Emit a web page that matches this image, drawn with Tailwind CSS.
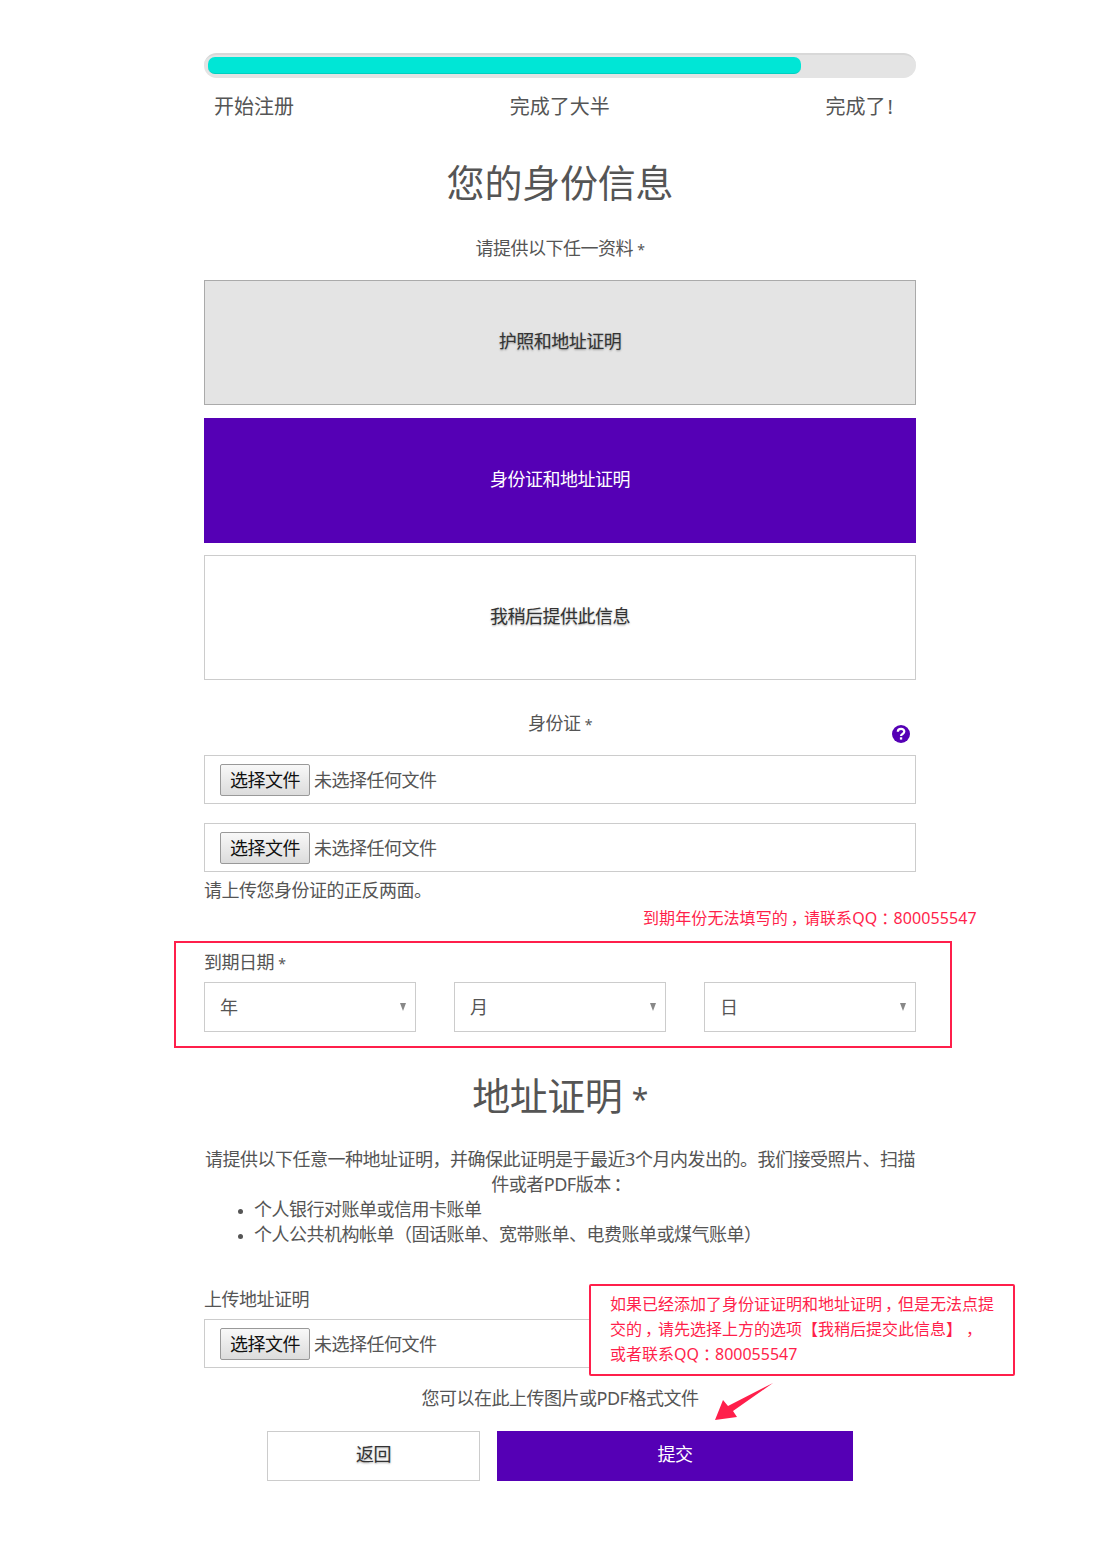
<!DOCTYPE html>
<html lang="zh-CN">
<head>
    <meta charset="UTF-8">
    <meta name="viewport" content="width=device-width, initial-scale=1.0">
    <title>您的身份信息</title>
    <script src="https://cdn.jsdelivr.net/npm/@tailwindcss/browser@4"></script>
</head>
<body class="bg-white text-[#555] font-[Noto_Sans,Noto_Sans_CJK_SC,sans-serif]">
    <div class="relative w-[1100px] h-[1543px] overflow-hidden">
        <main class="w-[712px] ml-[204px] pt-[53px] text-[18px] tracking-[-0.5px] leading-[24px]">
            <!-- progress -->
            <div class="h-[25px] rounded-full bg-[#e4e4e4] border-t-[2px] border-[#d8d8d8] pt-[2px] pl-[4px]">
                <div class="h-[17px] w-[593px] rounded-[7px] bg-[#00e6d6] border-b border-[#00cfc0]"></div>
            </div>
            <div class="mt-[17px] flex justify-between pl-[10px] pr-[21px] text-[20px] tracking-normal h-[24px]">
                <span>开始注册</span>
                <span>完成了大半</span>
                <span>完成了<span class="pl-[2px] pr-[2px]">!</span></span>
            </div>

            <h1 class="mt-[40px] h-[46px] text-center text-[38px] leading-[46px] tracking-[-0.2px]">您的身份信息</h1>
            <p class="mt-[31px] h-[24px] text-center">请提供以下任一资料 <span class="text-[14px] leading-[14px]">*</span></p>

            <div class="mt-[20px] h-[125px] flex items-center justify-center pb-[4px] bg-[#e4e4e4] border border-[#aaa] text-[#333] [text-shadow:0_1px_2px_rgba(0,0,0,0.35)]">护照和地址证明</div>
            <div class="mt-[13px] h-[125px] flex items-center justify-center pb-[4px] bg-[#5500b5] text-white">身份证和地址证明</div>
            <div class="mt-[12px] h-[125px] flex items-center justify-center pb-[4px] bg-white border border-[#ccc] text-[#333] [text-shadow:0_1px_2px_rgba(0,0,0,0.35)]">我稍后提供此信息</div>

            <div class="relative mt-[31px] h-[24px] text-center">
                身份证 <span class="text-[14px] leading-[14px]">*</span>
                <svg class="absolute right-[5px] top-[13px] w-[20px] h-[20px]" viewBox="0 0 20 20">
                    <circle cx="10" cy="10" r="9" fill="#5500b5"/>
                    <path d="M6.8 7.8c0-2 1.500-3 3.300-3s3.200 1 3.200 2.800c0 2.400-3.300 2.300-3.300 4.400" fill="none" stroke="#fff" stroke-width="2.200"/>
                    <rect x="8.900" y="13.300" width="2.300" height="2.300" fill="#fff"/>
                </svg>
            </div>

            <div class="mt-[20px] h-[49px] flex items-center border border-[#ccc] pl-[15px]">
                <button class="h-[32px] w-[90px] border border-[#999] rounded-[2px] bg-gradient-to-b from-[#f8f8f8] to-[#dcdcdc] text-[#111] text-[18px]">选择文件</button>
                <span class="ml-[4px]">未选择任何文件</span>
            </div>
            <div class="mt-[19px] h-[49px] flex items-center border border-[#ccc] pl-[15px]">
                <button class="h-[32px] w-[90px] border border-[#999] rounded-[2px] bg-gradient-to-b from-[#f8f8f8] to-[#dcdcdc] text-[#111] text-[18px]">选择文件</button>
                <span class="ml-[4px]">未选择任何文件</span>
            </div>
            <p class="mt-[6px]">请上传您身份证的正反两面。</p>

            <p class="mt-[48px] h-[24px]">到期日期 <span class="text-[14px] leading-[14px]">*</span></p>
            <div class="mt-[8px] flex justify-between">
                <div class="relative w-[212px] h-[50px] border border-[#ccc] flex items-center pl-[15px]">
                    <span>年</span>
                    <svg class="absolute right-[9px] top-[20px] w-[6px] h-[8px]" viewBox="0 0 6 8"><path d="M0 0h6l-3 8z" fill="#888"/></svg>
                </div>
                <div class="relative w-[212px] h-[50px] border border-[#ccc] flex items-center pl-[15px]">
                    <span>月</span>
                    <svg class="absolute right-[9px] top-[20px] w-[6px] h-[8px]" viewBox="0 0 6 8"><path d="M0 0h6l-3 8z" fill="#888"/></svg>
                </div>
                <div class="relative w-[212px] h-[50px] border border-[#ccc] flex items-center pl-[15px]">
                    <span>日</span>
                    <svg class="absolute right-[9px] top-[20px] w-[6px] h-[8px]" viewBox="0 0 6 8"><path d="M0 0h6l-3 8z" fill="#888"/></svg>
                </div>
            </div>

            <h2 class="mt-[40px] h-[46px] text-center text-[38px] leading-[46px] tracking-[-0.5px]">地址证明 <span class="text-[30px] leading-[30px]">*</span></h2>
            <p class="mt-[29px] text-center leading-[25px] -mx-[4px]">请提供以下任意一种地址证明，并确保此证明是于最近3个月内发出的。我们接受照片、扫描<br>件或者PDF版本<span class="inline-block w-[18px] pr-[4px] text-center [font-feature-settings:'palt']">：</span></p>
            <ul class="list-disc pl-[50px] leading-[25px] marker:text-[13px]">
                <li>个人银行对账单或信用卡账单</li>
                <li>个人公共机构帐单（固话账单、宽带账单、电费账单或煤气账单）</li>
            </ul>

            <p class="mt-[40px]">上传地址证明</p>
            <div class="mt-[8px] h-[49px] flex items-center border border-[#ccc] pl-[15px]">
                <button class="h-[32px] w-[90px] border border-[#999] rounded-[2px] bg-gradient-to-b from-[#f8f8f8] to-[#dcdcdc] text-[#111] text-[18px]">选择文件</button>
                <span class="ml-[4px]">未选择任何文件</span>
            </div>
            <p class="mt-[18px] text-center">您可以在此上传图片或PDF格式文件</p>

            <div class="mt-[21px] flex justify-center gap-[17px]">
                <button class="w-[213px] h-[50px] pb-[4px] border border-[#ccc] bg-white text-[#333] text-[18px] [text-shadow:0_1px_2px_rgba(0,0,0,0.35)]">返回</button>
                <button class="w-[356px] h-[50px] pb-[4px] bg-[#5500b5] text-white text-[18px]">提交</button>
            </div>
        </main>

        <!-- red annotations on top of the page -->
        <p class="absolute left-[643px] top-[906px] text-[16px] leading-[24px] tracking-[0.1px] text-[#ff1f4b] whitespace-nowrap">到期年份无法填写的<span class="inline-block w-[16px] text-center [font-feature-settings:'palt']">，</span>请联系QQ<span class="inline-block w-[16px] text-center [font-feature-settings:'palt']">：</span>800055547</p>
        <div class="absolute left-[174px] top-[941px] w-[778px] h-[107px] border-2 border-[#ff1f4b]"></div>
        <div class="absolute left-[589px] top-[1284px] w-[426px] h-[92px] bg-white border-2 border-[#ff1f4b] rounded-[2px] pl-[19px] pr-[10px] pt-[6px] text-[16px] leading-[25px] text-[#ff1f4b]">如果已经添加了身份证证明和地址证明<span class="inline-block w-[16px] text-center [font-feature-settings:'palt']">，</span>但是无法点提<br>交的<span class="inline-block w-[16px] text-center [font-feature-settings:'palt']">，</span>请先选择上方的选项【我稍后提交此信息】<span class="inline-block w-[16px] ml-[1px] text-center [font-feature-settings:'palt']">，</span><br>或者联系QQ<span class="inline-block w-[16px] text-center [font-feature-settings:'palt']">：</span>800055547</div>
        <svg class="absolute left-[710px] top-[1380px] w-[70px] h-[45px]" viewBox="710 1380 70 45">
            <path d="M715 1420L723 1400L728 1406L773 1383L733 1411L737 1417Z" fill="#ff1f4b"/>
        </svg>
    </div>
</body>
</html>
